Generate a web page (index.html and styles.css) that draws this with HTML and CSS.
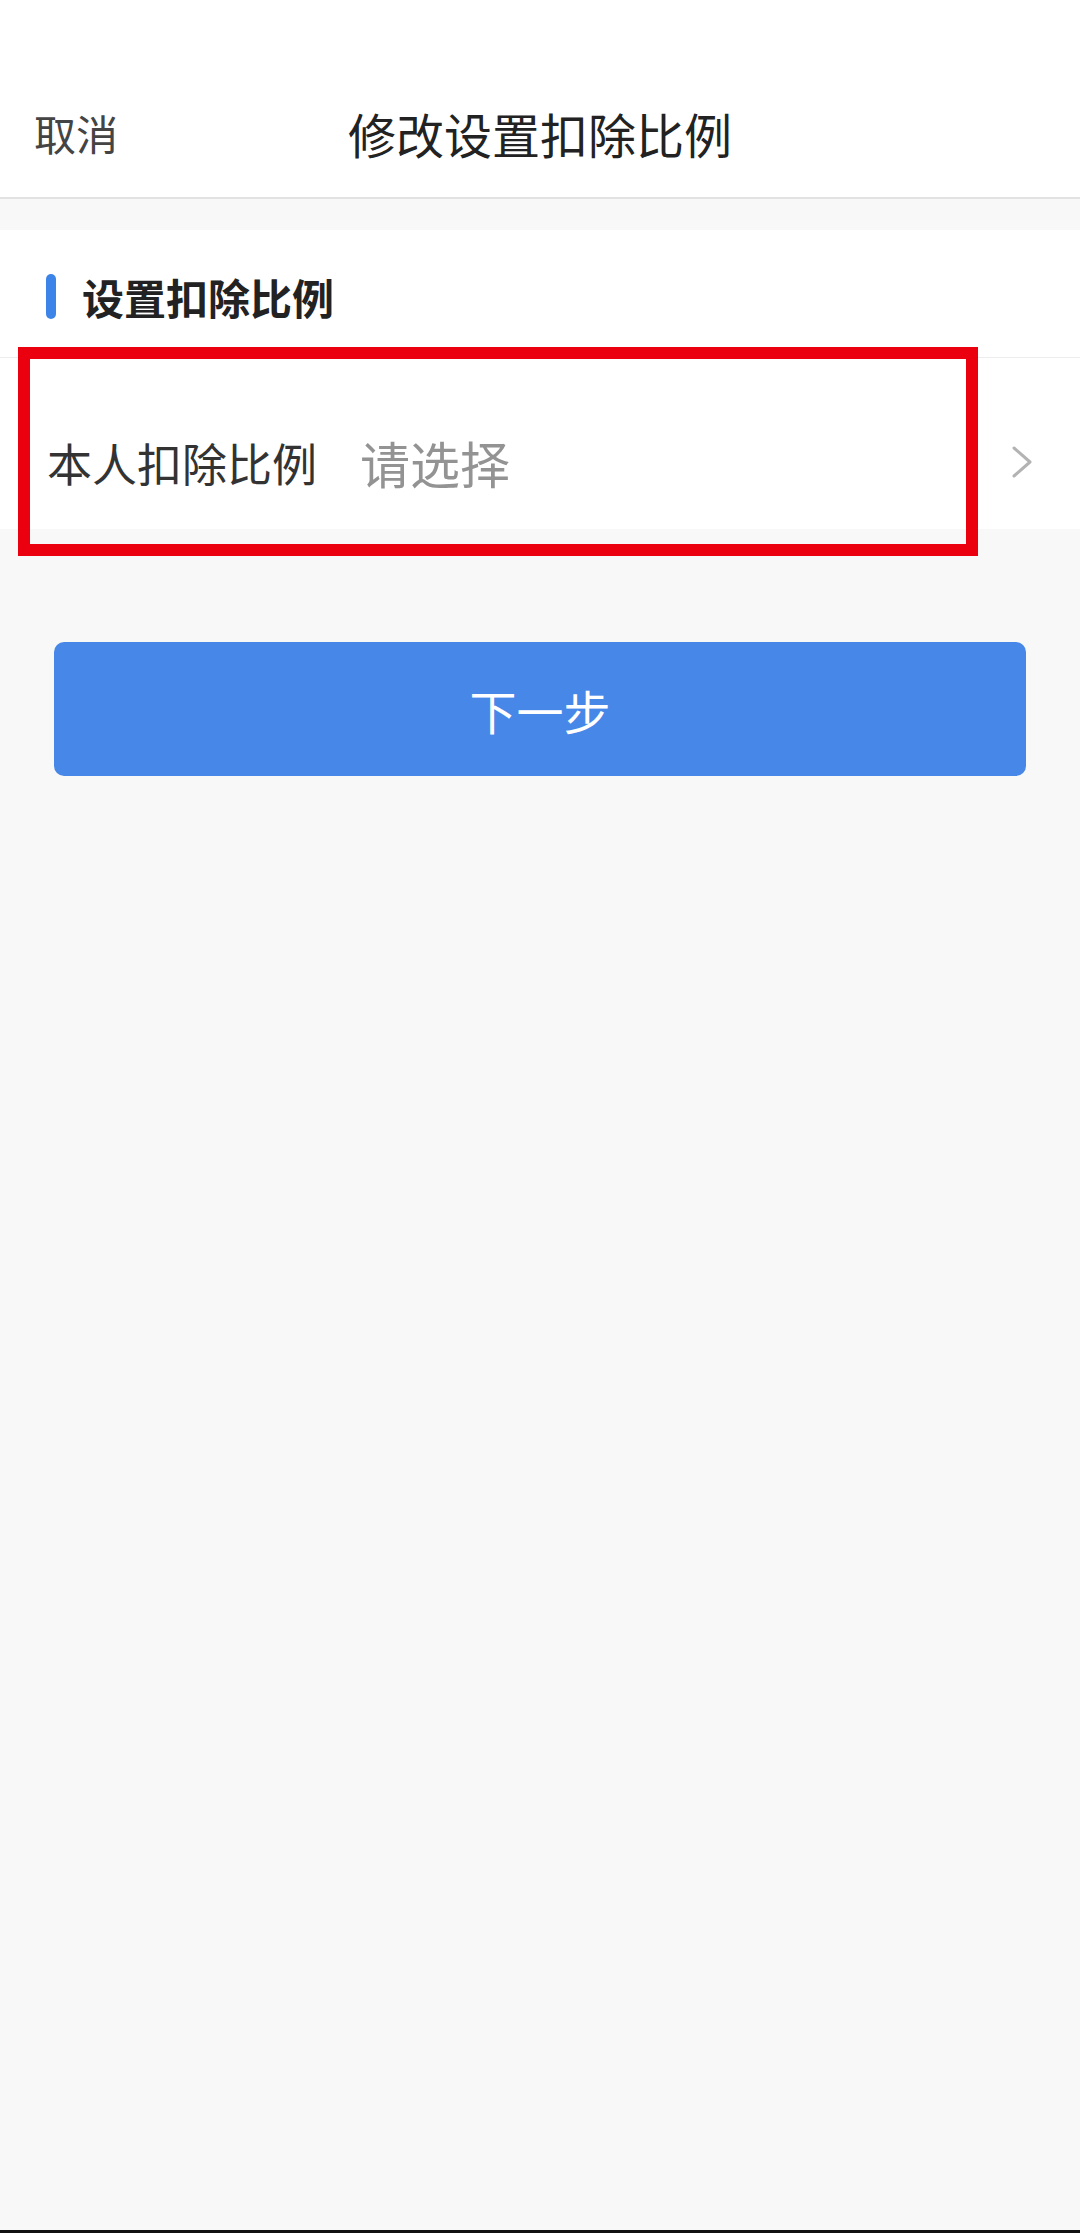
FILE: index.html
```html
<!DOCTYPE html>
<html lang="zh-CN">
<head>
<meta charset="utf-8">
<title>修改设置扣除比例</title>
<link rel="stylesheet" href="styles.css">
</head>
<body>
<div class="page">
  <header class="nav">
    <span class="nav-cancel">取消</span>
    <h1 class="nav-title">修改设置扣除比例</h1>
    <span class="nav-spacer"></span>
  </header>
  <section class="card">
    <div class="section-head">
      <span class="section-bar"></span>
      <span class="section-title">设置扣除比例</span>
    </div>
    <div class="row-wrap">
      <div class="row">
        <span class="row-label">本人扣除比例</span>
        <span class="row-value">请选择</span>
        <svg class="row-arrow" viewBox="0 0 22 32" width="22" height="32">
          <path d="M3 2 L19 16 L3 30" fill="none" stroke="#b3b3b3" stroke-width="3" stroke-linecap="round" stroke-linejoin="round"/>
        </svg>
      </div>
      <div class="highlight"></div>
    </div>
  </section>
  <button class="next-btn">下一步</button>
  <div class="filler"></div>
  <div class="bottom-edge"></div>
</div>
</body>
</html>
```

FILE: styles.css
```css
* { box-sizing: border-box; }
html, body { margin: 0; padding: 0; }
body {
  font-family: "Noto Sans CJK SC", "Noto Sans", sans-serif;
  background: #f8f8f8;
}
.page {
  width: 1080px;
  height: 2233px;
  display: flex;
  flex-direction: column;
}
.nav {
  height: 199px;
  padding-top: 68px;
  background: #ffffff;
  border-bottom: 2px solid #e2e2e2;
  display: grid;
  grid-template-columns: 1fr auto 1fr;
  align-items: center;
}
.nav-cancel {
  padding-left: 34px;
  font-size: 42px;
  color: #444444;
  line-height: 1;
}
.nav-title {
  margin: 0;
  font-size: 48px;
  font-weight: 400;
  color: #222222;
  line-height: 1;
}
.card {
  margin-top: 31px;
  background: #ffffff;
}
.section-head {
  height: 128px;
  padding: 6px 0 0 46px;
  display: flex;
  align-items: center;
  gap: 26px;
  border-bottom: 1px solid #ededed;
}
.section-bar {
  width: 10px;
  height: 45px;
  border-radius: 5px;
  background: #3d84e8;
}
.section-title {
  font-size: 42px;
  font-weight: 700;
  color: #222222;
  line-height: 1;
}
.row-wrap {
  position: relative;
}
.row {
  height: 171px;
  padding: 37px 47px 0 47px;
  display: flex;
  align-items: center;
}
.row-label {
  font-size: 45px;
  color: #333333;
  line-height: 1;
}
.row-value {
  margin-left: 43px;
  font-size: 50px;
  color: #939393;
  line-height: 1;
  flex: 1;
}
.highlight {
  position: absolute;
  left: 18px;
  top: -11px;
  width: 960px;
  height: 209px;
  border: 12px solid #ea000e;
}
.next-btn {
  margin: 113px 54px 0 54px;
  height: 134px;
  border: none;
  border-radius: 10px;
  background: #4787e8;
  color: #ffffff;
  font-family: "Noto Sans CJK SC", "Noto Sans", sans-serif;
  font-size: 47px;
  line-height: 1;
}
.filler {
  flex: 1;
}
.bottom-edge {
  height: 3px;
  background: #111111;
}
```
